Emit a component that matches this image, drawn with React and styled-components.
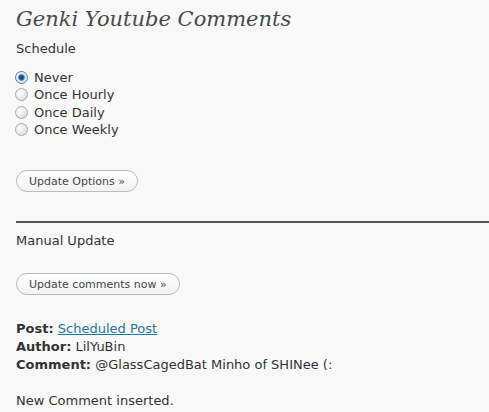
import React from 'react';
import styled, { createGlobalStyle } from 'styled-components';

const GlobalStyle = createGlobalStyle`
    html, body {
        margin: 0;
        padding: 0;
        background: #f9f9f9;
    }
    body {
        font-family: "DejaVu Sans", Verdana, sans-serif;
        font-size: 13px;
        color: #333;
        overflow: hidden;
    }
`;

const Wrap = styled.div`
    padding: 0 0 0 16px;
    width: 489px;
    box-sizing: border-box;
`;

const Title = styled.h2`
    margin: 0;
    padding: 4px 0 0;
    font-family: "DejaVu Serif", Georgia, serif;
    font-style: italic;
    font-weight: normal;
    font-size: 21px;
    line-height: 30px;
    color: #4a4a4a;
`;

const Label = styled.p`
    margin: ${p => p.$top || 0}px 0 0;
    line-height: 18px;
`;

const RadioList = styled.div`
    margin-top: 11px;
    display: flex;
    flex-direction: column;
`;

const RadioRow = styled.label`
    display: flex;
    align-items: center;
    gap: 6px;
    height: 17.33px;
`;

const Dot = styled.span`
    width: 13px;
    height: 13px;
    margin-left: -1px;
    border-radius: 50%;
    box-sizing: border-box;
    border: 1px solid ${p => (p.$on ? '#5f7f9c' : '#a9a9a9')};
    background: ${p => (p.$on
        ? 'radial-gradient(circle at 50% 50%, #0a3f78 0, #1f64a8 2.5px, #dfe8f1 3.8px, #f4f4f4 100%)'
        : 'radial-gradient(circle at 35% 35%, #ffffff 0, #e6e6e6 60%, #c9c9c9 100%)')};
`;

const Button = styled.button`
    display: inline-block;
    margin-top: ${p => p.$top}px;
    height: 22px;
    padding: 0 12px;
    border: 1px solid #bbb;
    border-radius: 11px;
    background: linear-gradient(#ffffff, #f2f2f2);
    font-family: "DejaVu Sans", Verdana, sans-serif;
    font-size: 11px;
    color: #464646;
    cursor: pointer;
`;

const Rule = styled.hr`
    margin: 29px 0 0;
    border: 0;
    border-top: 2px solid #555;
`;

const Result = styled.div`
    margin-top: 25px;
    line-height: 18px;
`;

const Strong = styled.b`
    font-weight: bold;
`;

const Link = styled.a`
    color: #21759b;
    text-decoration: underline;
`;

const options = ['Never', 'Once Hourly', 'Once Daily', 'Once Weekly'];

export default function App() {
    return (
        <>
            <GlobalStyle />
            <Wrap>
                <Title>Genki Youtube Comments</Title>
                <Label $top={6}>Schedule</Label>
                <RadioList>
                    {options.map((o, i) => (
                        <RadioRow key={o}>
                            <Dot $on={i === 0} />
                            {o}
                        </RadioRow>
                    ))}
                </RadioList>
                <div>
                    <Button $top={32}>Update Options &raquo;</Button>
                </div>
                <Rule />
                <Label $top={9}>Manual Update</Label>
                <div>
                    <Button $top={23}>Update comments now &raquo;</Button>
                </div>
                <Result>
                    <div><Strong>Post:</Strong> <Link href="#">Scheduled Post</Link></div>
                    <div><Strong>Author:</Strong> LilYuBin</div>
                    <div><Strong>Comment:</Strong> @GlassCagedBat Minho of SHINee (:</div>
                    <br />
                    <div>New Comment inserted.</div>
                </Result>
            </Wrap>
        </>
    );
}
